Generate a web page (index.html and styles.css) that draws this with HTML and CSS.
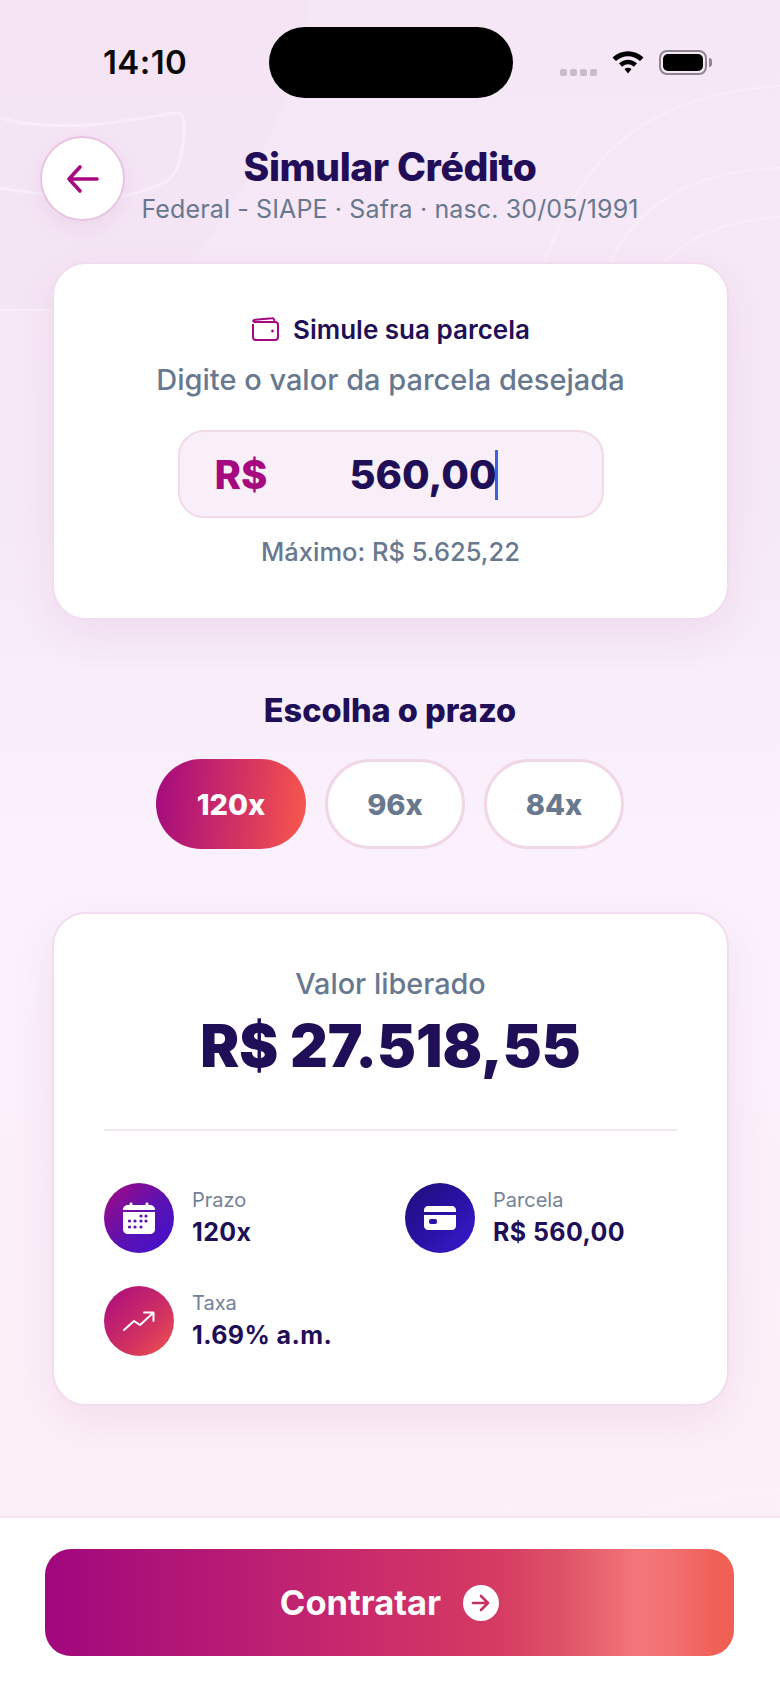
FILE: index.html
```html
<!DOCTYPE html>
<html lang="pt-BR">
<head>
<meta charset="utf-8">
<title>Simular Crédito</title>
<link rel="stylesheet" href="styles.css">
</head>
<body>
<div class="page">
  <svg class="decor" width="780" height="1516" viewBox="0 0 780 1516" fill="none">
    <path d="M0 0H310C300 90 250 190 190 262V310H0Z" fill="#f3e2f3" opacity=".4"/>
    <g opacity=".55">
      <path d="M0 118C60 135 130 120 175 113C186 112 184 125 184 135C182 160 175 178 165 182C110 210 50 195 0 188" stroke="#fbf4fb" stroke-width="3"/>
      <path d="M0 310H52" stroke="#fbf4fb" stroke-width="2"/>
      <path d="M545 262C580 160 640 95 780 86" stroke="#fbf4fb" stroke-width="2"/>
      <path d="M610 262C640 200 700 170 780 168" stroke="#fbf4fb" stroke-width="2"/>
      <path d="M665 262C690 235 730 220 780 217" stroke="#fbf4fb" stroke-width="2"/>
      <path d="M640 1516C680 1500 720 1495 780 1490" stroke="#fdf6f8" stroke-width="2"/>
    </g>
  </svg>

  <div class="status">
    <span class="time">14:10</span>
    <span class="island"></span>
    <div class="status-icons">
      <span class="signal"><i></i><i></i><i></i><i></i></span>
      <svg class="wifi" width="34" height="26" viewBox="0 0 34 26">
        <path d="M1.500 8.500C10.500 0 23.500 0 32.500 8.500L29 12C22 5.500 12 5.500 5 12Z" fill="#000"/>
        <path d="M8 14.500C13.500 9.500 20.500 9.500 26 14.500L22.800 17.800C19 14.500 15 14.500 11.200 17.800Z" fill="#000"/>
        <path d="M13.500 20C15.500 18.300 18.500 18.300 20.500 20L17 24.500Z" fill="#000"/>
      </svg>
      <span class="battery"><span class="battery-fill"></span></span>
      <span class="battery-tip"></span>
    </div>
  </div>

  <header class="header">
    <button class="back">
      <svg width="36" height="36" viewBox="0 0 36 36" fill="none" stroke="#a5087f" stroke-width="3.600" stroke-linecap="round" stroke-linejoin="round"><path d="M32 18H5M15 6L4 18L15 30"/></svg>
    </button>
    <div class="titles">
      <h1>Simular Crédito</h1>
      <p>Federal - SIAPE · Safra · nasc. 30/05/1991</p>
    </div>
  </header>

  <section class="card card-input">
    <div class="simule">
      <svg width="28" height="24" viewBox="0 0 28 24" fill="none" stroke="#a5087f" stroke-width="2" stroke-linejoin="round"><path d="M2 7V20C2 21.700 3.300 23 5 23H24C25.700 23 27 21.700 27 20V8C27 6.300 25.700 5 24 5H4C2.500 5 2 4 2.500 3.500C3 3 3.500 2.800 4.500 2.700L21 1.200C22.500 1 23.500 2.200 23.500 5"/><circle cx="21.500" cy="14" r="1.400" fill="#a5087f" stroke="none"/></svg>
      <strong>Simule sua parcela</strong>
    </div>
    <p class="digite">Digite o valor da parcela desejada</p>
    <div class="input">
      <span class="currency">R$</span>
      <span class="value">560,00</span>
      <span class="cursor"></span>
    </div>
    <p class="max">Máximo: R$ 5.625,22</p>
  </section>

  <section class="prazo">
    <h2>Escolha o prazo</h2>
    <div class="pills">
      <button class="pill pill-active">120x</button>
      <button class="pill">96x</button>
      <button class="pill">84x</button>
    </div>
  </section>

  <section class="card card-result">
    <p class="lib-label">Valor liberado</p>
    <p class="lib-value">R$ 27.518,55</p>
    <hr class="divider">
    <div class="grid">
      <div class="item">
        <span class="ico ico-purple">
          <svg width="32" height="32" viewBox="0 0 32 32" fill="#fff"><path d="M8 0.500C9 0.500 9.500 1 9.500 2V3H22.500V2C22.500 1 23 0.500 24 0.500C25 0.500 25.500 1 25.500 2V3H27C29.700 3 32 5 32 7.500V8H0V7.500C0 5 2.300 3 5 3H6.500V2C6.500 1 7 0.500 8 0.500Z"/><path d="M0 10H32V27.500C32 30 29.700 32 27 32H5C2.300 32 0 30 0 27.500Z"/><g fill="#5a12b4"><circle cx="18" cy="14" r="1.600"/><circle cx="23" cy="14" r="1.600"/><circle cx="6.500" cy="19" r="1.600"/><circle cx="12" cy="19" r="1.600"/><circle cx="18" cy="19" r="1.600"/><circle cx="23" cy="19" r="1.600"/><circle cx="6.500" cy="25" r="1.600"/><circle cx="12" cy="25" r="1.600"/><circle cx="18" cy="25" r="1.600"/></g></svg>
        </span>
        <div class="txt"><span>Prazo</span><b>120x</b></div>
      </div>
      <div class="item">
        <span class="ico ico-blue">
          <svg width="32" height="24" viewBox="0 0 32 24" fill="#fff"><path d="M4 0H28C30.200 0 32 1.800 32 4V6H0V4C0 1.800 1.800 0 4 0Z"/><path d="M0 9H32V20C32 22.200 30.200 24 28 24H4C1.800 24 0 22.200 0 20Z"/><rect x="5" y="13" width="8" height="5" rx="2" fill="#2a12a8"/></svg>
        </span>
        <div class="txt"><span>Parcela</span><b>R$ 560,00</b></div>
      </div>
      <div class="item">
        <span class="ico ico-red">
          <svg width="32" height="20" viewBox="0 0 32 20" fill="none" stroke="#fff" stroke-width="2" stroke-linecap="round" stroke-linejoin="round"><path d="M1 19L11 10L17 14L30 2M21 1.500H30.500V10"/></svg>
        </span>
        <div class="txt"><span>Taxa</span><b>1.69% a.m.</b></div>
      </div>
    </div>
  </section>

  <footer class="footer">
    <button class="cta">
      <span>Contratar</span>
      <span class="cta-ico">
        <svg width="22" height="22" viewBox="0 0 22 22" fill="none" stroke="#c9305f" stroke-width="2.600" stroke-linecap="round" stroke-linejoin="round"><path d="M3 11H18M11 4L18 11L11 18"/></svg>
      </span>
    </button>
  </footer>
</div>
</body>
</html>
```
FILE: styles.css
```css
* { box-sizing: border-box; }
html, body { margin: 0; padding: 0; }
body { font-family: Inter, "Noto Sans", sans-serif; color: #1f0f57; }
h1, h2, p { margin: 0; }
button { font-family: inherit; border: 0; padding: 0; background: none; }

.page {
  position: relative;
  width: 780px;
  height: 1690px;
  overflow: hidden;
  display: flex;
  flex-direction: column;
  background: linear-gradient(180deg, #f6e7f6 0%, #f6e9f6 30%, #faf1fc 50%, #fbeffa 70%, #fdf0f4 100%);
}
.decor { position: absolute; left: 0; top: 0; }

.status {
  position: relative;
  display: grid;
  grid-template-columns: 269px 244px 1fr;
  height: 136px;
  padding-top: 27px;
}
.time {
  font-size: 33px;
  font-weight: 600;
  color: #0b0b0b;
  padding: 17px 0 0 103px;
  line-height: 36px;
  letter-spacing: .4px;
}
.island { width: 244px; height: 71px; border-radius: 36px; background: #000; }
.status-icons { display: flex; align-items: flex-start; padding: 22px 0 0 47px; }
.signal { display: flex; gap: 3px; margin-top: 20px; }
.signal i { width: 7px; height: 7px; border-radius: 2px; background: #c7bcc7; }
.wifi { margin-left: 14px; }
.battery {
  margin-left: 14px;
  margin-top: 1px;
  width: 48px;
  height: 25px;
  border: 2px solid #8d878d;
  border-radius: 8px;
  padding: 2px;
  display: block;
}
.battery-fill { display: block; height: 100%; border-radius: 5px; background: #000; }
.battery-tip { width: 3px; height: 9px; margin-top: 9px; margin-left: 2px; border-radius: 0 3px 3px 0; background: #8d878d; }

.header {
  position: relative;
  display: grid;
  grid-template-columns: 85px 1fr 85px;
  padding: 0 40px;
  height: 126px;
}
.back {
  width: 85px;
  height: 85px;
  border-radius: 50%;
  background: #fff;
  border: 2px solid #e8c4e2;
  display: flex;
  align-items: center;
  justify-content: center;
  box-shadow: 0 8px 20px rgba(160, 60, 150, .08);
}
.titles { text-align: center; }
.titles h1 { font-size: 39px; line-height: 46px; font-weight: 800; letter-spacing: -0.4px; color: #220e58; margin-top: 8px; white-space: nowrap; }
.titles p { font-size: 25px; line-height: 34px; letter-spacing: .13px; color: #68788f; white-space: nowrap; margin: 2px -40px 0; }

.card {
  position: relative;
  margin: 0 51px 0 52px;
  width: 677px;
  background: #fff;
  border: 2px solid #f2dcef;
  border-radius: 34px;
  box-shadow: 0 16px 40px rgba(170, 70, 160, .09);
}
.card-input {
  height: 358px;
  display: flex;
  flex-direction: column;
  align-items: center;
  padding-top: 49px;
}
.simule { display: flex; align-items: center; gap: 14px; height: 32px; }
.simule strong { font-size: 26px; font-weight: 600; color: #1f0f57; }
.digite { font-size: 29px; line-height: 36px; color: #68788f; font-weight: 500; margin-top: 17px; }
.input {
  position: relative;
  width: 426px;
  height: 88px;
  margin-top: 32px;
  padding-left: 35px;
  display: flex;
  align-items: center;
  gap: 82px;
  background: #f9eff8;
  border: 2px solid #f3d9ea;
  border-radius: 26px;
}
.currency { font-size: 40px; font-weight: 800; color: #a5087f; }
.value { font-size: 40px; font-weight: 800; color: #1f0f57; letter-spacing: 0; }
.cursor { position: absolute; left: 315px; top: 18px; width: 3px; height: 50px; background: #3b63dd; }
.max { font-size: 25.500px; line-height: 32px; color: #68788f; margin-top: 18px; font-weight: 500; }

.prazo { position: relative; display: flex; flex-direction: column; align-items: center; height: 292px; padding-top: 71px; }
.prazo h2 { font-size: 32.500px; line-height: 40px; font-weight: 800; color: #1f0f57; white-space: nowrap; }
.pills { display: flex; gap: 19px; margin-top: 28px; }
.pill {
  height: 90px;
  width: 140px;
  border-radius: 45px;
  background: #fff;
  border: 3px solid #f1d6e8;
  font-size: 29px;
  font-weight: 800;
  color: #68788f;
}
.pill-active {
  width: 150px;
  border: 0;
  color: #fff;
  background: linear-gradient(96deg, #a30a80 0%, #d8375f 62%, #f9594b 100%);
}

.card-result { height: 494px; padding: 0 50px; text-align: center; }
.lib-label { font-size: 28.800px; line-height: 36px; color: #68788f; font-weight: 500; margin-top: 52px; }
.lib-value { font-size: 58.500px; line-height: 70px; font-weight: 900; color: #1f0f57; margin-top: 9px; white-space: nowrap; }
.divider { border: 0; height: 2px; background: #efe7f0; margin: 48px 0 0; }
.grid {
  display: grid;
  grid-template-columns: 301px 1fr;
  row-gap: 33px;
  margin-top: 52px;
  text-align: left;
}
.item { display: flex; align-items: center; gap: 18px; }
.ico { width: 70px; height: 70px; border-radius: 50%; display: flex; align-items: center; justify-content: center; flex: none; }
.ico-purple { background: linear-gradient(135deg, #a4097f 0%, #5a12b4 55%, #3f10cf 100%); }
.ico-blue { background: linear-gradient(135deg, #1f0f78 0%, #2a12a8 55%, #3a1bd0 100%); }
.ico-red { background: linear-gradient(135deg, #a80a80 0%, #d4345f 65%, #f0594d 100%); }
.txt { display: flex; flex-direction: column; margin-top: -1px; }
.txt span { font-size: 20px; line-height: 26px; color: #748299; }
.txt b { font-size: 25px; line-height: 32px; font-weight: 700; color: #1f0f57; letter-spacing: .4px; margin-top: 3px; }

.footer {
  position: relative;
  margin-top: auto;
  height: 174px;
  background: #fff;
  border-top: 2px solid #f2e3f0;
  padding: 31px 46px 0 45px;
}
.cta {
  width: 689px;
  height: 107px;
  border-radius: 26px;
  display: flex;
  align-items: center;
  justify-content: center;
  gap: 22px;
  color: #fff;
  font-size: 34.500px;
  font-weight: 700;
  background: linear-gradient(90deg, #a1077e 0%, #b51a74 25%, #c82a6c 45%, #d53a63 65%, #dd5268 75%, #f4767a 86%, #f27071 91%, #ef5f54 98%);
}
.cta-ico { width: 36px; height: 36px; border-radius: 50%; background: #fff; display: flex; align-items: center; justify-content: center; }
```
